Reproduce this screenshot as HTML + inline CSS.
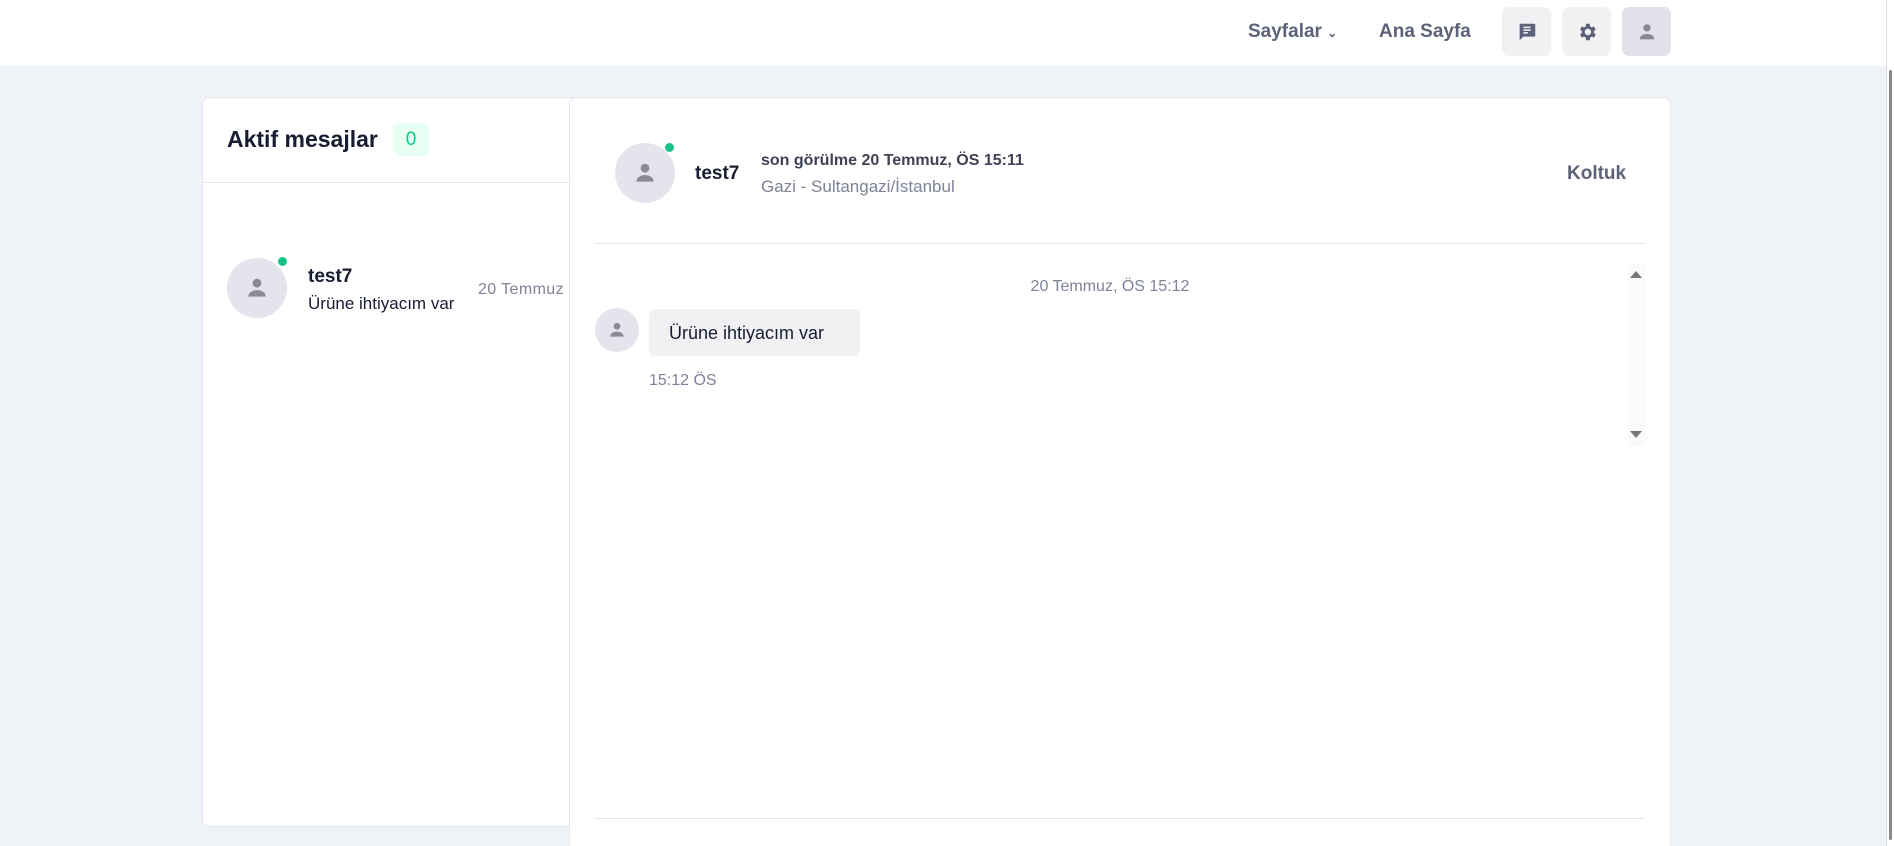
<!DOCTYPE html>
<html style="overflow:hidden;height:846px"><head><meta charset="utf-8"><style>
*{box-sizing:border-box;margin:0;padding:0}
body{width:1894px;height:846px;overflow:hidden;background:#eff2f6;font-family:"Liberation Sans",sans-serif;position:relative}
.a{position:absolute}
.hdr{left:0;top:0;width:1886px;height:66px;background:#fff}
.btn{top:7px;width:49px;height:49px;border-radius:7px;background:#f1f1f4;display:flex;align-items:center;justify-content:center}
.av{border-radius:50%;background:#e4e4ec;display:flex;align-items:center;justify-content:center}
.dot{width:11px;height:11px;border-radius:50%;background:#17c28a;border:1px solid #fff}
</style></head><body>
<div class="a hdr"></div>
<div class="a" style="left:1248px;top:21px;font-size:19px;color:#5e6278;font-weight:bold">Sayfalar <span style="font-size:12px">&#8964;</span></div>
<div class="a" style="left:1379px;top:21px;font-size:19px;color:#5e6278;font-weight:bold">Ana Sayfa</div>
<div class="a btn" style="left:1502px"><svg width="22" height="22" viewBox="0 0 24 24"><path d="M4 3h16a1 1 0 0 1 1 1v12a1 1 0 0 1-1 1H8l-4 4z" fill="#5e6278"/><path d="M8 7h8M8 10h8M8 13h5" stroke="#f1f1f4" stroke-width="1.6"/></svg></div>
<div class="a btn" style="left:1562px"><svg width="22" height="22" viewBox="0 0 24 24"><path fill="#5e6278" d="M19.4 13a7.5 7.5 0 0 0 0-2l2.1-1.6-2-3.5-2.5 1a7 7 0 0 0-1.7-1L15 3h-4l-.4 2.9a7 7 0 0 0-1.7 1l-2.5-1-2 3.5L6.5 11a7.5 7.5 0 0 0 0 2l-2.1 1.6 2 3.5 2.5-1a7 7 0 0 0 1.7 1L11 21h4l.4-2.9a7 7 0 0 0 1.7-1l2.5 1 2-3.5zM13 15.5a3.5 3.5 0 1 1 0-7 3.5 3.5 0 0 1 0 7z"/></svg></div>
<div class="a btn" style="left:1622px;background:#e1e1ea"><svg width="22" height="22" viewBox="0 0 24 24" fill="#8a8a94"><circle cx="12" cy="7.5" r="4"/><path d="M4 20c0-4 4-6 8-6s8 2 8 6z"/></svg></div>
<div class="a" style="left:1886px;top:0;width:8px;height:846px;background:#fff;border-left:1px solid #ddd"></div>
<div class="a" style="left:1889px;top:70px;width:3px;height:770px;background:#888;border-radius:2px"></div>

<div class="a" style="left:202px;top:97px;width:380px;height:730px;background:#fff;border:1px solid #e4e6ef;border-radius:7px"></div>
<div class="a" style="left:227px;top:126px;font-size:23px;font-weight:bold;color:#181c32">Aktif mesajlar</div>
<div class="a" style="left:393px;top:123px;width:36px;height:33px;background:#e8fff3;border-radius:5px;color:#17c28a;font-size:19px;text-align:center;line-height:34px">0</div>
<div class="a" style="left:203px;top:182px;width:366px;height:1px;background:#e4e6ef"></div>
<div class="a av" style="left:227px;top:258px;width:60px;height:60px"><svg width="26" height="26" viewBox="0 0 24 24" fill="#8a8a94"><circle cx="12" cy="7.5" r="4"/><path d="M4 20c0-4 4-6 8-6s8 2 8 6z"/></svg></div>
<div class="a dot" style="left:277px;top:256px"></div>
<div class="a" style="left:308px;top:266px;font-size:19px;font-weight:bold;color:#181c32">test7</div>
<div class="a" style="left:308px;top:294px;font-size:17px;color:#181c32">Ürüne ihtiyacım var</div>
<div class="a" style="left:478px;top:281px;font-size:16px;color:#7e8299;width:91px;overflow:hidden;white-space:nowrap;letter-spacing:0.4px">20 Temmuz</div>

<div class="a" style="left:569px;top:97px;width:1102px;height:749px;background:#fff;border:1px solid #e4e6ef;border-bottom:none;border-radius:7px 7px 0 0"></div>
<div class="a av" style="left:615px;top:143px;width:60px;height:60px"><svg width="26" height="26" viewBox="0 0 24 24" fill="#8a8a94"><circle cx="12" cy="7.5" r="4"/><path d="M4 20c0-4 4-6 8-6s8 2 8 6z"/></svg></div>
<div class="a dot" style="left:664px;top:142px"></div>
<div class="a" style="left:695px;top:163px;font-size:19px;font-weight:bold;color:#181c32">test7</div>
<div class="a" style="left:761px;top:152px;font-size:16px;font-weight:bold;color:#3f4254">son görülme 20 Temmuz, ÖS 15:11</div>
<div class="a" style="left:761px;top:177px;font-size:17px;color:#7e8299">Gazi - Sultangazi/İstanbul</div>
<div class="a" style="left:1567px;top:163px;font-size:19px;font-weight:bold;color:#5e6278">Koltuk</div>
<div class="a" style="left:594px;top:243px;width:1051px;height:1px;background:#e4e6ef"></div>
<div class="a" style="left:1628px;top:264px;width:17px;height:182px;background:#fafafb"></div>
<div class="a" style="left:1630px;top:271px;width:0;height:0;border-left:6px solid transparent;border-right:6px solid transparent;border-bottom:7px solid #777"></div>
<div class="a" style="left:1630px;top:431px;width:0;height:0;border-left:6px solid transparent;border-right:6px solid transparent;border-top:7px solid #777"></div>
<div class="a" style="left:1010px;top:278px;width:200px;text-align:center;font-size:16px;color:#7e8299">20 Temmuz, ÖS 15:12</div>
<div class="a av" style="left:595px;top:308px;width:44px;height:44px"><svg width="20" height="20" viewBox="0 0 24 24" fill="#8a8a94"><circle cx="12" cy="7.5" r="4"/><path d="M4 20c0-4 4-6 8-6s8 2 8 6z"/></svg></div>
<div class="a" style="left:649px;top:309px;width:211px;height:47px;background:#f1f1f4;border-radius:6px;font-size:18px;color:#181c32;line-height:49px;padding-left:20px">Ürüne ihtiyacım var</div>
<div class="a" style="left:649px;top:372px;font-size:16px;color:#7e8299">15:12 ÖS</div>
<div class="a" style="left:594px;top:818px;width:1051px;height:1px;background:#e4e6ef"></div>
</body></html>
